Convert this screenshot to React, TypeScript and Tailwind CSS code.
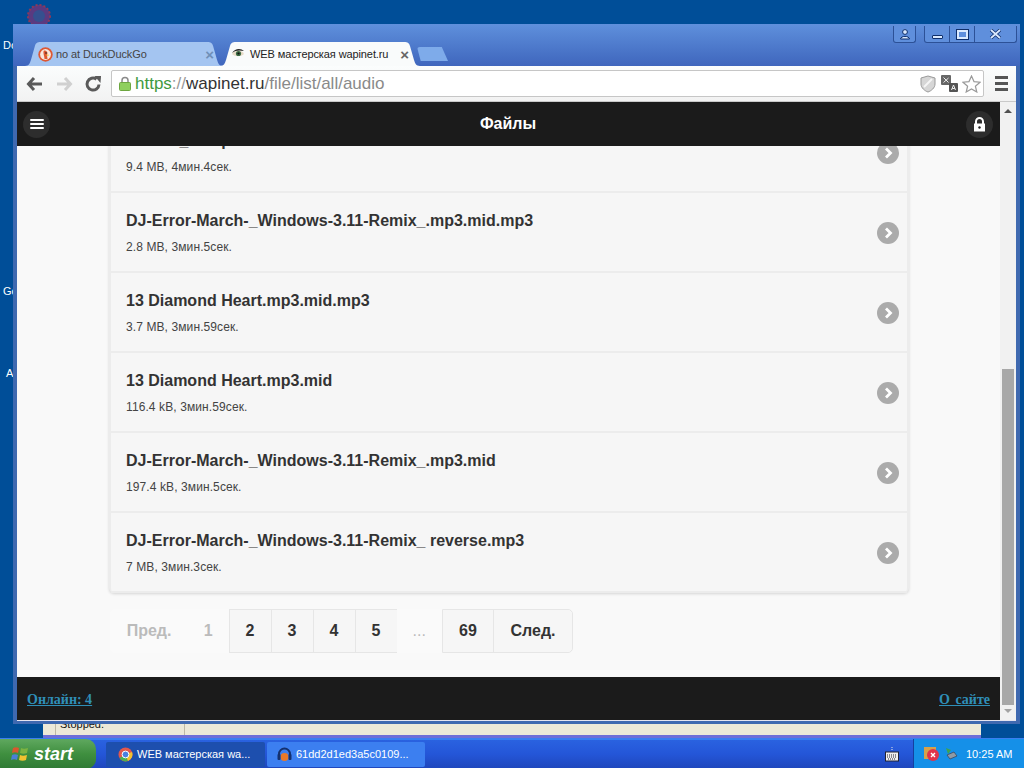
const files = [
  { title: "100500_m.mp3", info: "9.4 MB, 4мин.4сек." },
  { title: "DJ-Error-March-_Windows-3.11-Remix_.mp3.mid.mp3", info: "2.8 MB, 3мин.5сек." },
  { title: "13 Diamond Heart.mp3.mid.mp3", info: "3.7 MB, 3мин.59сек." },
  { title: "13 Diamond Heart.mp3.mid", info: "116.4 kB, 3мин.59сек." },
  { title: "DJ-Error-March-_Windows-3.11-Remix_.mp3.mid", info: "197.4 kB, 3мин.5сек." },
  { title: "DJ-Error-March-_Windows-3.11-Remix_ reverse.mp3", info: "7 MB, 3мин.3сек." },
];

function TabShape({ fill }: { fill: string }) {
  return (
    <svg className="absolute inset-0 h-full w-full" viewBox="0 0 200 24" preserveAspectRatio="none">
      <path d="M0 24 C4 24 5 21 6 18 L10 4 C11 1 12 0 16 0 L184 0 C188 0 189 1 190 4 L194 18 C195 21 196 24 200 24 Z" fill={fill} />
    </svg>
  );
}

function RowArrow() {
  return (
    <div className="mt-[1px] flex h-[22px] w-[22px] items-center justify-center rounded-full bg-[#ababab]">
      <svg width="12" height="14" viewBox="0 0 12 14" fill="none">
        <path d="M4 2.5 L8.5 7 L4 11.5" stroke="#fff" strokeWidth="2.8" />
      </svg>
    </div>
  );
}

function FileRow({ title, info }: { title: string; info: string }) {
  return (
    <div className="flex h-[80px] items-center justify-between border-b-2 border-[#ececec] pl-[15px] pr-[8px]">
      <div>
        <div className="text-[16px] leading-[20px] font-bold text-[#333]">{title}</div>
        <div className="mt-[9px] text-[12px] leading-[14px] tracking-[0.1px] text-[#444]">{info}</div>
      </div>
      <RowArrow />
    </div>
  );
}

function Pagination() {
  const cell = "flex h-full items-center justify-center border-r border-[#e6e6e6] bg-[#f6f6f6] text-[#333]";
  const off = "flex h-full items-center justify-center text-[#bbb] bg-[#fafafa]";
  return (
    <div className="mt-[16px] ml-[1px] flex h-[44px] w-[463px] items-center text-[16px] font-bold">
      <div className={`${off} w-[79px] rounded-l-[5px]`}>Пред.</div>
      <div className={`${off} w-[41px]`}>1</div>
      <div className="flex h-full items-center border-y border-l border-[#e6e6e6]">
        <div className={`${cell} w-[42px]`}>2</div>
        <div className={`${cell} w-[42px]`}>3</div>
        <div className={`${cell} w-[42px]`}>4</div>
        <div className={`${cell} w-[41px] border-r-0`}>5</div>
      </div>
      <div className={`${off} w-[46px] font-normal`}>...</div>
      <div className="flex h-full items-center rounded-r-[5px] border border-[#e6e6e6]">
        <div className={`${cell} w-[51px]`}>69</div>
        <div className={`${cell} w-[78px] rounded-r-[5px] border-r-0`}>След.</div>
      </div>
    </div>
  );
}

function WindowControls() {
  return (
    <div className="absolute right-[3px] top-[2px] flex h-[17px] items-start text-[#0f2f6b]">
      <div className="mr-[8px] flex h-[17px] w-[23px] items-center justify-center rounded-b-[3px] border-x border-b border-[#2c5197] bg-[#5f8fdc]">
        <svg width="12" height="11" viewBox="0 0 12 11">
          <circle cx="6" cy="3" r="2.4" fill="#dbeafe" stroke="#0f2f6b" />
          <path d="M1.5 10 C2 6.5 10 6.5 10.5 10 Z" fill="#dbeafe" stroke="#0f2f6b" />
        </svg>
      </div>
      <div className="flex h-[17px] items-center rounded-b-[3px] border-x border-b border-[#2c5197] bg-[#5f8fdc]">
        <div className="flex h-full w-[25px] items-center justify-center border-r border-[#2c5197] pt-[5px]">
          <div className="h-[4px] w-[11px] rounded-[1px] border border-[#0f2f6b] bg-[#dbeafe]" />
        </div>
        <div className="flex h-full w-[25px] items-center justify-center border-r border-[#2c5197]">
          <div className="h-[9px] w-[11px] border-2 border-[#dbeafe] outline outline-[#0f2f6b]" />
        </div>
        <div className="flex h-full w-[41px] items-center justify-center">
          <svg width="13" height="10" viewBox="0 0 13 10">
            <path d="M2 1 L11 9 M11 1 L2 9" stroke="#0f2f6b" strokeWidth="3.4" />
            <path d="M2 1 L11 9 M11 1 L2 9" stroke="#dbeafe" strokeWidth="1.8" />
          </svg>
        </div>
      </div>
    </div>
  );
}

function TabStrip() {
  return (
    <div className="flex h-[24px] items-end pl-[8px]">
      <div className="relative flex h-[24px] w-[198px] items-center pl-[13px] pr-[9px] text-[11px] tracking-[-0.1px] text-[#444]">
        <TabShape fill="#a4c5f1" />
        <svg className="relative mr-[3px] shrink-0" width="15" height="15" viewBox="0 0 15 15">
          <circle cx="7.5" cy="7.5" r="7.2" fill="#de5833" />
          <circle cx="7.5" cy="7.5" r="5.4" fill="#f7e8e0" />
          <path d="M6 3.5 C9.5 3.5 10 6 9 8 L9.5 12 L6.5 12 C6.5 9 4.5 5 6 3.5 Z" fill="#de5833" />
          <circle cx="8" cy="6" r="0.8" fill="#222" />
          <path d="M7.5 8 L10.5 7.5 L10.5 9 Z" fill="#f2c230" />
        </svg>
        <span className="relative flex-1">no at DuckDuckGo</span>
        <span className="relative text-[15px] leading-none font-bold text-[#6f8fb8]">×</span>
      </div>
      <div className="relative -ml-[3px] flex h-[24px] w-[200px] items-center pl-[11px] pr-[11px] text-[11px] tracking-[-0.1px] text-[#222]">
        <TabShape fill="#f9fbfb" />
        <svg className="relative mr-[5px] shrink-0" width="14" height="12" viewBox="0 0 14 12">
          <path d="M1 6 C4 1 10 1 13 6 C10 9 4 9 1 6 Z" fill="#e8dcc8" />
          <path d="M1 5 C4 0 10 0 13 3 C9 2 4 2 1 5 Z" fill="#222" />
          <circle cx="7.5" cy="5.5" r="2.6" fill="#3d6b45" />
          <circle cx="7.5" cy="5.5" r="1.1" fill="#111" />
        </svg>
        <span className="relative flex-1 whitespace-nowrap">WEB мастерская wapinet.ru</span>
        <span className="relative ml-[4px] text-[15px] leading-none font-bold text-[#666]">×</span>
      </div>
      <div className="mb-[5px] -ml-[3px] h-[14px] w-[31px] bg-[#7eabea] [clip-path:polygon(0_0,80%_0,100%_100%,12%_100%)] rounded-t-[3px]" />
    </div>
  );
}

function Toolbar() {
  return (
    <div className="flex h-[36px] items-center border-b border-[#c9c9c9] bg-gradient-to-b from-[#fbfdfd] to-[#f2f2f2] pl-[9px] pr-[8px]">
      <svg width="18" height="16" viewBox="0 0 18 16" className="ml-0">
        <path d="M8 2 L2.5 8 L8 14 M3 8 H16" fill="none" stroke="#5a5a5a" strokeWidth="3" />
      </svg>
      <svg width="18" height="16" viewBox="0 0 18 16" className="ml-[11px]">
        <path d="M10 2 L15.5 8 L10 14 M15 8 H2" fill="none" stroke="#d0d0d0" strokeWidth="3" />
      </svg>
      <svg width="18" height="18" viewBox="0 0 18 18" className="ml-[11px]">
        <path d="M15 9.5 A6 6 0 1 1 12.5 4.2" fill="none" stroke="#5a5a5a" strokeWidth="3" />
        <path d="M10.5 1 L17 1 L16.5 8 Z" fill="#5a5a5a" />
      </svg>
      <div className="ml-[9px] flex h-[27px] flex-1 items-center rounded-[2px] border border-[#c6c6c6] bg-white pl-[7px] pr-[2px]">
        <svg width="12" height="15" viewBox="0 0 12 15" className="shrink-0">
          <path d="M3 7 V4.5 A3 3 0 0 1 9 4.5 V7" fill="none" stroke="#8a8a8a" strokeWidth="1.5" />
          <rect x="0.5" y="6.5" width="11" height="8" rx="1" fill="#8fcf5f" stroke="#6da640" />
        </svg>
        <div className="ml-[4px] flex-1 text-[17px] leading-none font-light whitespace-nowrap text-[#8a8a8a]">
          <span className="text-[#3f9a3f]">https</span>
          <span className="text-[#999]">://</span>
          <span className="text-[#333]">wapinet.ru</span>
          /file/list/all/audio
        </div>
        <svg width="16" height="18" viewBox="0 0 16 18" className="mr-[5px]">
          <path d="M8 1 L15 3 V9 C15 13 11 16 8 17 C5 16 1 13 1 9 V3 Z" fill="#d6d6d6" stroke="#9a9a9a" />
          <path d="M4 12 L12 4" stroke="#f5f5f5" strokeWidth="2" />
        </svg>
        <svg width="17" height="17" viewBox="0 0 17 17" className="mr-[4px]">
          <rect x="0" y="0" width="10" height="10" rx="1" fill="#666" />
          <rect x="8" y="8" width="9" height="9" rx="1" fill="#555" />
          <path d="M2.5 2.5 L7.5 7.5 M7.5 3 L2.5 7.5" stroke="#eee" strokeWidth="1" />
          <path d="M10.5 15 L12.5 10 L14.5 15 M11.2 13.5 H13.8" fill="none" stroke="#eee" strokeWidth="1" />
        </svg>
        <svg width="19" height="18" viewBox="0 0 19 18">
          <path d="M9.5 1 L12 6.6 L18 7.2 L13.4 11.2 L14.8 17 L9.5 14 L4.2 17 L5.6 11.2 L1 7.2 L7 6.6 Z" fill="#fff" stroke="#9a9a9a" strokeWidth="1.2" />
        </svg>
      </div>
      <div className="ml-[11px] flex w-[13px] flex-col gap-[3px]">
        <div className="h-[3px] bg-[#555]" />
        <div className="h-[3px] bg-[#555]" />
        <div className="h-[3px] bg-[#555]" />
      </div>
    </div>
  );
}

function AppHeader() {
  return (
    <header className="flex h-[44px] shrink-0 items-center justify-between bg-[#1b1b1b] pl-[6px] pr-[7px]">
      <div className="flex h-[27px] w-[27px] flex-col items-center justify-center gap-[2px] rounded-full bg-[#2d2d2d]">
        <div className="h-[2px] w-[14px] rounded-full bg-white" />
        <div className="h-[2px] w-[14px] rounded-full bg-white" />
        <div className="h-[2px] w-[14px] rounded-full bg-white" />
      </div>
      <div className="text-[16px] font-bold text-white">Файлы</div>
      <div className="flex h-[27px] w-[27px] items-center justify-center rounded-full bg-[#2d2d2d]">
        <svg width="13" height="15" viewBox="0 0 13 15">
          <path d="M3 7 V4.5 A3.5 3.5 0 0 1 10 4.5 V7" fill="none" stroke="#fff" strokeWidth="2" />
          <path d="M1 6.5 H12 V14.5 H1 Z" fill="#fff" />
          <circle cx="6.5" cy="10.5" r="1.2" fill="#1b1b1b" />
        </svg>
      </div>
    </header>
  );
}

function Scrollbar() {
  return (
    <div className="flex w-[16px] shrink-0 flex-col items-center bg-[#f1f1f1]">
      <div className="mt-[7px] h-0 w-0 border-x-[4px] border-b-[4px] border-x-transparent border-b-[#505050]" />
      <div className="flex-1" />
      <div className="h-[336px] w-[12px] bg-[#a8a8a8]" />
      <div className="mt-[4px] mb-[7px] h-0 w-0 border-x-[4px] border-t-[4px] border-x-transparent border-t-[#a3a3a3]" />
    </div>
  );
}

function Browser() {
  return (
    <div className="absolute left-[13px] top-[24px] flex h-[700px] w-[1007px] flex-col rounded-t-[4px] border-x-[4px] border-b-[3px] border-[#3f69b0] bg-[#3f69b0]">
      {/* title bar with tabs */}
      <div className="relative -mx-[4px] bg-gradient-to-b from-[#5f90dc] to-[#3f66bd] px-[4px] pt-[18px]">
        <WindowControls />
        <TabStrip />
      </div>
      <Toolbar />
      <div className="flex flex-1 overflow-hidden border-b border-[#e4e4f0]">
        <div className="flex flex-1 flex-col bg-[#f9f9f9]">
          <AppHeader />
          <main className="flex-1 overflow-hidden pl-[92px]">
            <div className="-mt-[33px] w-[800px] rounded-b-[5px] border-x-2 border-[#ececec] bg-[#f6f6f6] shadow-[0_1px_3px_rgba(0,0,0,0.15)]">
              {files.map((f) => (
                <FileRow key={f.title} title={f.title} info={f.info} />
              ))}
            </div>
            <Pagination />
          </main>
          <footer className="flex h-[43px] shrink-0 items-center justify-between bg-[#1b1b1b] px-[10px] pt-[2px] font-['Liberation_Serif',serif] text-[14px] font-bold text-[#2f8fb8] underline">
            <span>Онлайн: 4</span>
            <span className="[word-spacing:2px]">О сайте</span>
          </footer>
        </div>
        <Scrollbar />
      </div>
    </div>
  );
}

function Taskbar() {
  return (
    <div className="flex h-[30px] shrink-0 items-center border-t-2 border-[#3a7ef0] bg-gradient-to-b from-[#2a62e0] via-[#2456d8] to-[#1f47bd] text-white">
      <div className="flex h-[30px] w-[96px] items-center rounded-r-[10px] bg-gradient-to-b from-[#5fa85f] via-[#3f8f3f] to-[#2f7a35] pl-[11px]">
        <svg width="19" height="18" viewBox="0 0 19 18">
          <path d="M2 3 C4 2 6 2 8 3 L7 8 C5 7 3 7 1 8 Z" fill="#d9572e" />
          <path d="M10 3 C12 4 14 4 17 3 L16 8 C14 9 11 9 9 8 Z" fill="#7cb342" />
          <path d="M1 10 C3 9 5 9 7 10 L6 15 C4 14 2 14 0 15 Z" fill="#4a7fd6" />
          <path d="M9 10 C11 11 13 11 16 10 L15 15 C13 16 10 16 8 15 Z" fill="#f2c230" />
        </svg>
        <span className="ml-[4px] text-[18px] font-bold italic">start</span>
      </div>
      <div className="ml-[10px] flex h-[25px] w-[159px] items-center rounded-[2px] bg-[#1d4fae] pl-[12px] text-[11px]">
        <svg width="15" height="15" viewBox="0 0 15 15" className="mr-[4px] shrink-0">
          <circle cx="7.5" cy="7.5" r="7" fill="#e2574c" />
          <path d="M7.5 7.5 L1.5 11 A7 7 0 0 0 10 14 Z" fill="#4caf50" />
          <path d="M7.5 7.5 L14 5 A7 7 0 0 1 10 14 Z" fill="#f2c230" />
          <circle cx="7.5" cy="7.5" r="3.4" fill="#4a80e0" stroke="#fff" />
        </svg>
        <span className="whitespace-nowrap">WEB мастерская wa...</span>
      </div>
      <div className="ml-[2px] flex h-[25px] w-[158px] items-center rounded-[2px] bg-[#3c7ff0] pl-[10px] text-[11px]">
        <svg width="15" height="15" viewBox="0 0 15 15" className="mr-[4px] shrink-0">
          <path d="M2 9 V7 A5.5 5.5 0 0 1 13 7 V9" fill="none" stroke="#14306e" strokeWidth="2" />
          <circle cx="7.5" cy="10" r="4" fill="#e8792b" />
          <rect x="0.5" y="7" width="3" height="6" rx="1" fill="#14306e" />
          <rect x="11.5" y="7" width="3" height="6" rx="1" fill="#14306e" />
        </svg>
        <span className="whitespace-nowrap">61dd2d1ed3a5c0109...</span>
      </div>
      <div className="flex-1" />
      <svg width="14" height="15" viewBox="0 0 14 15" className="mr-[14px]">
        <path d="M7 0 V4" stroke="#e6e6e6" strokeDasharray="1 1" />
        <rect x="0.5" y="5" width="13" height="9" fill="#eee" stroke="#223" />
        <path d="M2 8 H12 M2 10 H12 M3 12 H11" stroke="#223" strokeDasharray="1 1" />
      </svg>
      <div className="flex h-[30px] w-[111px] items-center border-l border-[#1440a0] bg-[#1590e8] pl-[10px] text-[11px]">
        <svg width="16" height="16" viewBox="0 0 16 16" className="mr-[4px] shrink-0">
          <rect x="0" y="1" width="12" height="12" fill="#d6a24a" />
          <circle cx="9" cy="9" r="6" fill="#e0344b" />
          <path d="M7 7 L11 11 M11 7 L7 11" stroke="#fff" strokeWidth="1.4" />
        </svg>
        <svg width="14" height="14" viewBox="0 0 14 14" className="mr-[8px] shrink-0">
          <path d="M2 1 L7 3 L4 7 Z" fill="#3fa34d" />
          <path d="M3 8 L10 5 L13 9 L6 12 Z" fill="#8f9aa5" stroke="#334" strokeWidth="0.6" />
        </svg>
        <span className="whitespace-nowrap">10:25 AM</span>
      </div>
    </div>
  );
}

export default function App() {
  return (
    <div className="flex h-[768px] w-[1024px] flex-col overflow-hidden bg-[#004e98] font-['Liberation_Sans',sans-serif]">
      <div className="relative flex-1">
        {/* desktop icons, mostly behind the browser */}
        <svg className="absolute left-[24px] top-[4px]" width="30" height="22" viewBox="0 0 30 22">
          <circle cx="15" cy="12" r="11" fill="#5a3a80" />
          <circle cx="15" cy="12" r="6" fill="#35508f" />
          <circle cx="15" cy="12" r="11" fill="none" stroke="#8a3a5a" strokeDasharray="2 2" strokeWidth="2" />
        </svg>
        <div className="absolute left-[3px] top-[37px] text-[11px] text-white">Do</div>
        <div className="absolute left-[3px] top-[283px] text-[11px] text-white">Go</div>
        <div className="absolute left-[6px] top-[365px] text-[11px] text-white">A</div>
        {/* window behind the browser */}
        <div className="absolute left-[43px] top-[718px] h-[20px] w-[938px] overflow-hidden border-b-[3px] border-[#6e6ed8] bg-[#ece9d8]">
          <div className="ml-[12px] h-full w-[130px] border-x border-[#bdb9a6] pl-[4px] text-[11px] leading-[13px] text-[#111]">Stopped.</div>
        </div>
        <Browser />
      </div>
      <Taskbar />
    </div>
  );
}
